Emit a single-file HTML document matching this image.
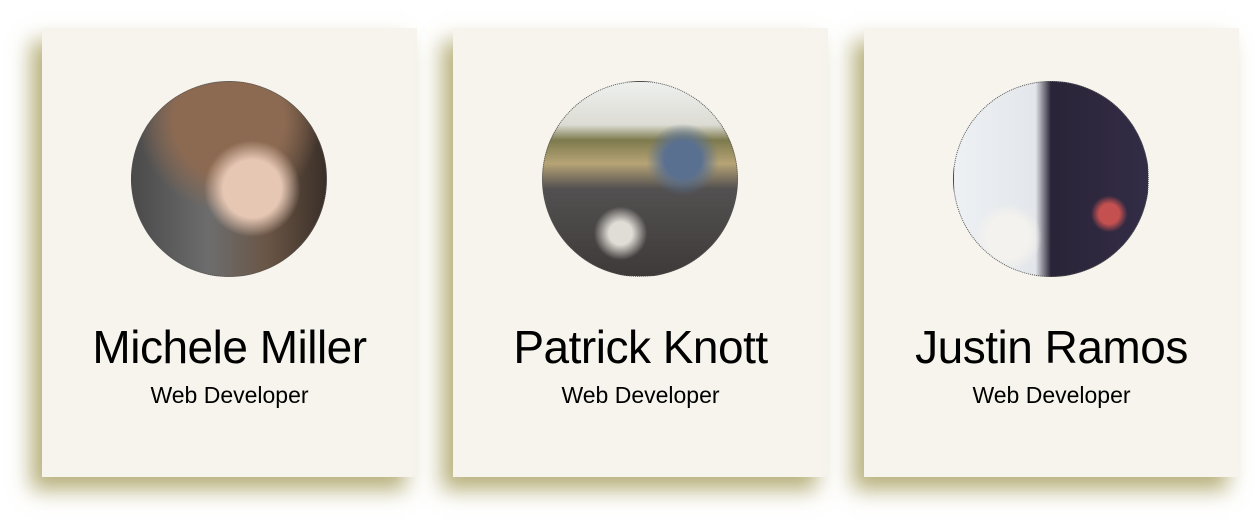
<!DOCTYPE html>
<html><head><meta charset="utf-8"><style>
html,body{margin:0;padding:0;background:#fff;width:1255px;height:523px;overflow:hidden}
.card{position:absolute;top:28px;width:375px;height:449px;background:#f6f4ec;box-shadow:-11px 13px 20px rgba(160,150,80,0.75);font-family:"Liberation Sans",sans-serif;color:#000;text-align:center}
.av{position:absolute;left:89px;top:53px;width:196px;height:196px;border-radius:50%;border:1px dotted #555;box-sizing:border-box;overflow:hidden}
.name{position:absolute;left:0;right:0;top:294px;font-size:46px;line-height:50px;letter-spacing:-0.5px}
.role{position:absolute;left:0;right:0;top:353px;font-size:23px;line-height:28px}
</style></head><body>
<div class="card" style="left:42px">
 <div class="av" style="background:radial-gradient(circle at 62% 55%,#e6c7b4 0 18%,transparent 30%),radial-gradient(circle at 50% 20%,#8c6a52 0 30%,transparent 50%),linear-gradient(90deg,#4a4a4a,#6d6d6d 40%,#6a5545 70%,#3a2f28)"></div>
 <div class="name">Michele Miller</div><div class="role">Web Developer</div>
</div>
<div class="card" style="left:453px">
 <div class="av" style="background:radial-gradient(circle at 40% 78%,#e0ddd6 0 6%,transparent 14%),radial-gradient(circle at 72% 40%,#5a7090 0 10%,transparent 20%),linear-gradient(180deg,#eef0ee 0,#dcdcd4 22%,#7d7a4e 30%,#b7a476 42%,#525050 55%,#3f3a3a 100%)"></div>
 <div class="name">Patrick Knott</div><div class="role">Web Developer</div>
</div>
<div class="card" style="left:864px">
 <div class="av" style="background:radial-gradient(circle at 28% 80%,#f4f2ee 0 10%,transparent 16%),radial-gradient(circle at 80% 68%,#c45050 0 5%,transparent 9%),linear-gradient(90deg,#eef1f4 0,#e3e6ea 42%,#2a2438 50%,#332c46 100%)"></div>
 <div class="name">Justin Ramos</div><div class="role">Web Developer</div>
</div>
</body></html>
